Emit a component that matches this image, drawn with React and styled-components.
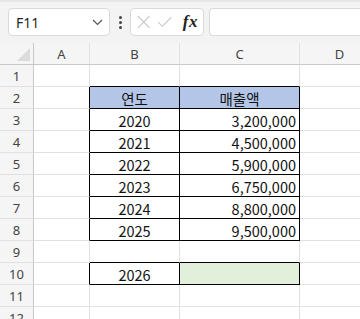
import React from 'react'
import styled, { createGlobalStyle } from 'styled-components'

const GlobalStyle = createGlobalStyle`
  html, body {
    margin: 0;
    padding: 0;
    background: #ffffff;
    overflow: hidden;
  }
  * { box-sizing: border-box; }
`

const COLS = [
  { key: 'A', width: 56 },
  { key: 'B', width: 90 },
  { key: 'C', width: 120 },
  { key: 'D', width: 80 },
]

// each row: cells for A..D. border flags: r = black right, b = black bottom
const ROWS = [
  { n: 1, cells: [{}, { b: true }, { b: true }, {}] },
  { n: 2, cells: [{ r: true }, { r: true, b: true, fill: '#b4c6e7', text: '연도', align: 'center' }, { r: true, b: true, fill: '#b4c6e7', text: '매출액', align: 'center' }, {}] },
  { n: 3, cells: [{ r: true }, { r: true, b: true, text: '2020', align: 'center' }, { r: true, b: true, text: '3,200,000', align: 'right' }, {}] },
  { n: 4, cells: [{ r: true }, { r: true, b: true, text: '2021', align: 'center' }, { r: true, b: true, text: '4,500,000', align: 'right' }, {}] },
  { n: 5, cells: [{ r: true }, { r: true, b: true, text: '2022', align: 'center' }, { r: true, b: true, text: '5,900,000', align: 'right' }, {}] },
  { n: 6, cells: [{ r: true }, { r: true, b: true, text: '2023', align: 'center' }, { r: true, b: true, text: '6,750,000', align: 'right' }, {}] },
  { n: 7, cells: [{ r: true }, { r: true, b: true, text: '2024', align: 'center' }, { r: true, b: true, text: '8,800,000', align: 'right' }, {}] },
  { n: 8, cells: [{ r: true }, { r: true, b: true, text: '2025', align: 'center' }, { r: true, b: true, text: '9,500,000', align: 'right' }, {}] },
  { n: 9, cells: [{}, { b: true }, { b: true }, {}] },
  { n: 10, cells: [{ r: true }, { r: true, b: true, text: '2026', align: 'center' }, { r: true, b: true, fill: '#e2efda' }, {}] },
  { n: 11, cells: [{}, {}, {}, {}] },
  { n: 12, cells: [{}, {}, {}, {}] },
]

const Page = styled.div`
  width: 360px;
  height: 319px;
  overflow: hidden;
  background: #ffffff;
`

const Toolbar = styled.div`
  height: 43px;
  background: #f3f3f3;
  display: flex;
  align-items: flex-start;
  padding: 6px 0 0 8px;
  border-top: 2px solid #e6e6e6;
`

const NameBox = styled.div`
  width: 102px;
  height: 28px;
  background: #ffffff;
  border: 1px solid #dadada;
  border-radius: 4px;
  display: flex;
  align-items: center;
  justify-content: space-between;
  padding: 0 6px 0 7px;
  font-family: 'Noto Sans', 'Liberation Sans', sans-serif;
  font-size: 14px;
  color: #262626;
`

const Dots = styled.div`
  width: 20px;
  height: 28px;
  display: flex;
  flex-direction: column;
  align-items: center;
  justify-content: center;
  gap: 2px;
  span {
    width: 3px;
    height: 3px;
    border-radius: 50%;
    background: #444;
  }
`

const FxBox = styled.div`
  width: 74px;
  height: 28px;
  background: #ffffff;
  border: 1px solid #dadada;
  border-radius: 4px;
  display: flex;
  align-items: center;
  padding: 0 5px 0 6px;
  gap: 7px;
`

const Fx = styled.span`
  font-family: 'Liberation Serif', 'DejaVu Serif', serif;
  font-style: italic;
  font-weight: 700;
  font-size: 17px;
  color: #222;
  margin-left: 3px;
  letter-spacing: 0.5px;
`

const FormulaInput = styled.div`
  flex: 1;
  height: 28px;
  margin-left: 5px;
  background: #ffffff;
  border: 1px solid #dadada;
  border-right: none;
  border-radius: 4px 0 0 4px;
`

const Grid = styled.div`
  display: grid;
  grid-template-columns: 34px ${COLS.map((c) => `${c.width}px`).join(' ')};
  grid-auto-rows: 22px;
`

const Corner = styled.div`
  background: #f5f5f5;
  border-right: 1px solid #c8c8c8;
  border-bottom: 1px solid #c8c8c8;
  position: relative;
  &::after {
    content: '';
    position: absolute;
    right: 3px;
    bottom: 3px;
    width: 0;
    height: 0;
    border-left: 13px solid transparent;
    border-bottom: 13px solid #dcdcdc;
  }
`

const ColHead = styled.div`
  background: #f5f5f5;
  border-right: 1px solid #e1e1e1;
  border-bottom: 1px solid #c8c8c8;
  display: flex;
  align-items: center;
  justify-content: center;
  font-family: 'Noto Sans', 'Liberation Sans', sans-serif;
  font-size: 13px;
  color: #444;
`

const RowHead = styled.div`
  background: #f5f5f5;
  border-right: 1px solid #c8c8c8;
  border-bottom: 1px solid #e1e1e1;
  display: flex;
  align-items: center;
  justify-content: center;
  font-family: 'Noto Sans', 'Liberation Sans', sans-serif;
  font-size: 13px;
  color: #444;
  padding-top: 1px;
`

const Cell = styled.div`
  background: ${(p) => p.$fill || '#ffffff'};
  border-right: 1px solid ${(p) => (p.$r ? '#000' : '#e1e1e1')};
  border-bottom: 1px solid ${(p) => (p.$b ? '#000' : '#e1e1e1')};
  display: flex;
  align-items: center;
  justify-content: ${(p) => (p.$align === 'right' ? 'flex-end' : 'center')};
  padding: 1px 3px 0 3px;
  font-family: 'Noto Sans CJK KR', 'Noto Sans', sans-serif;
  font-size: 14.5px;
  color: #111;
  white-space: nowrap;
`

const Chevron = () => (
  <svg width="11" height="7" viewBox="0 0 11 7">
    <path d="M1 1 L5.5 5.5 L10 1" fill="none" stroke="#555" strokeWidth="1.2" />
  </svg>
)

const Cross = () => (
  <svg width="14" height="14" viewBox="0 0 14 14">
    <path d="M1 1 L13 13 M13 1 L1 13" fill="none" stroke="#c4c4c4" strokeWidth="1.1" />
  </svg>
)

const Check = () => (
  <svg width="16" height="12" viewBox="0 0 16 12">
    <path d="M1 6 L5.5 10.5 L15 1" fill="none" stroke="#c4c4c4" strokeWidth="1.1" />
  </svg>
)

const App = () => (
  <Page>
    <GlobalStyle />
    <Toolbar>
      <NameBox>
        <span>F11</span>
        <Chevron />
      </NameBox>
      <Dots>
        <span />
        <span />
        <span />
      </Dots>
      <FxBox>
        <Cross />
        <Check />
        <Fx>fx</Fx>
      </FxBox>
      <FormulaInput />
    </Toolbar>
    <Grid>
      <Corner />
      {COLS.map((c) => (
        <ColHead key={c.key}>{c.key}</ColHead>
      ))}
      {ROWS.map((row) => (
        <React.Fragment key={row.n}>
          <RowHead>{row.n}</RowHead>
          {row.cells.map((c, i) => (
            <Cell key={i} $r={c.r} $b={c.b} $fill={c.fill} $align={c.align}>
              {c.text}
            </Cell>
          ))}
        </React.Fragment>
      ))}
    </Grid>
  </Page>
)

export default App
